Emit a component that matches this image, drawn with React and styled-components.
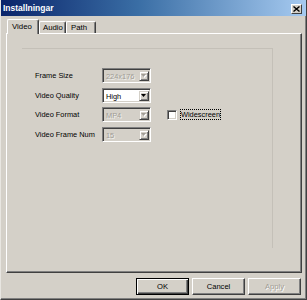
import React from "react";
import styled, { createGlobalStyle, css } from "styled-components";

const GlobalStyle = createGlobalStyle`
  html, body { margin: 0; padding: 0; background: #d4d0c8; }
  body { font-family: "Liberation Sans", Arial, sans-serif; }
  * { box-sizing: border-box; }
`;

const Window = styled.div`
  width: 307px;
  height: 300px;
  background: #d4d0c8;
  display: flex;
  flex-direction: column;
  border-left: 1px solid #e8e6e1;
  border-right: 1px solid #404040;
  border-bottom: 1px solid #404040;
  box-shadow: inset -1px -1px 0 #808080;
  overflow: hidden;
`;

const TitleBar = styled.div`
  height: 16px;
  flex: none;
  display: flex;
  align-items: center;
  justify-content: space-between;
  padding: 0 4px 0 2px;
  background: linear-gradient(90deg, #0a246a 0%, #3a6ea5 45%, #a6caf0 100%);
`;

const Title = styled.span`
  color: #fff;
  font-weight: bold;
  font-size: 8.5px;
  line-height: 16px;
`;

const CloseButton = styled.div`
  width: 11px;
  height: 10px;
  margin-top: 1px;
  background: #d4d0c8;
  border-top: 1px solid #fff;
  border-left: 1px solid #fff;
  border-right: 1px solid #404040;
  border-bottom: 1px solid #404040;
  display: flex;
  align-items: center;
  justify-content: center;
`;

const Body = styled.div`
  flex: 1;
  display: flex;
  flex-direction: column;
  padding: 3px 4px 0 5px;
`;

const TabRow = styled.div`
  display: flex;
  align-items: flex-end;
  padding-left: 1px;
  height: 14px;
  position: relative;
  z-index: 1;
`;

const Tab = styled.div`
  width: ${(p) => p.$w}px;
  height: ${(p) => (p.$active ? 15 : 12)}px;
  margin-bottom: ${(p) => (p.$active ? -1 : 0)}px;
  background: #d4d0c8;
  border-top: 1px solid #fff;
  border-left: 1px solid #fff;
  border-right: 1px solid #404040;
  box-shadow: inset -1px 0 0 #808080;
  border-radius: 2px 2px 0 0;
  font-size: 7.8px;
  color: #000;
  padding-left: ${(p) => p.$pl}px;
  display: flex;
  align-items: center;
  ${(p) => p.$active && css`padding-bottom: 1px;`}
`;

const Panel = styled.div`
  height: 240px;
  flex: none;
  border-top: 1px solid #fff;
  border-left: 1px solid #fff;
  border-right: 1px solid #404040;
  border-bottom: 1px solid #404040;
  box-shadow: inset -1px -1px 0 #808080;
  padding: 14px 0 0 15px;
`;

const GroupBox = styled.div`
  width: 251px;
  height: 200px;
  border-top: 1px solid #c4c0b8;
  border-right: 1px solid #c4c0b8;
  padding: 19px 0 0 13px;
`;

const FormGrid = styled.div`
  display: grid;
  grid-template-columns: 67px 49px auto;
  grid-auto-rows: 15px;
  row-gap: 4.67px;
  align-items: center;
`;

const Label = styled.span`
  font-size: 7.4px;
  color: #000;
  white-space: nowrap;
`;

const Combo = styled.div`
  width: 49px;
  height: 15px;
  display: flex;
  align-items: stretch;
  border-top: 1px solid #808080;
  border-left: 1px solid #808080;
  border-right: 1px solid #fff;
  border-bottom: 1px solid #fff;
  box-shadow: inset 1px 1px 0 #404040, inset -1px -1px 0 #d4d0c8;
  padding: 2px 1px 1px 2px;
  background: ${(p) => (p.$disabled ? "#d4d0c8" : "#fff")};
`;

const ComboText = styled.span`
  flex: 1;
  font-size: 7.4px;
  line-height: 11px;
  padding-left: 1px;
  color: ${(p) => (p.$disabled ? "#a09c95" : "#000")};
  ${(p) => p.$disabled && css`text-shadow: 1px 1px 0 #f2f1ee;`}
`;

const ComboButton = styled.div`
  width: 10px;
  flex: none;
  background: #d4d0c8;
  border-top: 1px solid #d4d0c8;
  border-left: 1px solid #d4d0c8;
  border-right: 1px solid #404040;
  border-bottom: 1px solid #404040;
  box-shadow: inset 1px 1px 0 #fff, inset -1px -1px 0 #808080;
  display: flex;
  align-items: center;
  justify-content: center;
`;

const CheckCell = styled.div`
  display: flex;
  align-items: center;
  margin-left: 16px;
`;

const CheckBox = styled.div`
  width: 10px;
  height: 10px;
  background: #fff;
  border-top: 1px solid #808080;
  border-left: 1px solid #808080;
  border-right: 1px solid #fff;
  border-bottom: 1px solid #fff;
  box-shadow: inset 1px 1px 0 #404040, inset -1px -1px 0 #d4d0c8;
`;

const CheckLabel = styled.span`
  margin-left: 3px;
  font-size: 7.4px;
  color: #000;
  padding: 1px 1px;
  outline: 1px dotted #000;
  outline-offset: -1px;
  line-height: 9px;
`;

const ButtonRow = styled.div`
  display: flex;
  justify-content: flex-end;
  gap: 3px;
  margin-top: 5px;
  padding-right: 1px;
`;

const Button = styled.div`
  width: 53px;
  height: 17px;
  display: flex;
  align-items: center;
  justify-content: center;
  font-size: 7.6px;
  background: #d4d0c8;
  color: ${(p) => (p.$disabled ? "#a09c95" : "#000")};
  ${(p) => p.$disabled && css`text-shadow: 1px 1px 0 #fff;`}
  border-top: 1px solid #fff;
  border-left: 1px solid #fff;
  border-right: 1px solid #404040;
  border-bottom: 1px solid #404040;
  box-shadow: inset -1px -1px 0 #808080;
  ${(p) =>
    p.$default &&
    css`
      border: 1px solid #000;
      box-shadow: inset 1px 1px 0 #fff, inset -1px -1px 0 #404040, inset -2px -2px 0 #808080;
    `}
`;

const Arrow = ({ disabled }) => (
  <svg width="6" height="4" viewBox="0 0 6 4">
    {disabled && <path d="M1 1h5l-2.5 3z" fill="#fff" />}
    <path d="M0 0h5l-2.5 3z" fill={disabled ? "#a09c95" : "#000"} />
  </svg>
);

const ComboBox = ({ value, disabled }) => (
  <Combo $disabled={disabled}>
    <ComboText $disabled={disabled}>{value}</ComboText>
    <ComboButton>
      <Arrow disabled={disabled} />
    </ComboButton>
  </Combo>
);

export default function App() {
  return (
    <>
      <GlobalStyle />
      <Window>
        <TitleBar>
          <Title>Installningar</Title>
          <CloseButton>
            <svg width="7" height="6" viewBox="0 0 7 6">
              <path d="M0.5 0.5l6 5M6.5 0.5l-6 5" stroke="#000" strokeWidth="1.4" />
            </svg>
          </CloseButton>
        </TitleBar>
        <Body>
          <TabRow>
            <Tab $active $w={32} $pl={4}>Video</Tab>
            <Tab $w={27} $pl={3}>Audio</Tab>
            <Tab $w={30} $pl={4}>Path</Tab>
          </TabRow>
          <Panel>
            <GroupBox>
              <FormGrid>
                <Label>Frame Size</Label>
                <ComboBox value="224x176" disabled />
                <span />
                <Label>Video Quality</Label>
                <ComboBox value="High" />
                <span />
                <Label>Video Format</Label>
                <ComboBox value="MP4" disabled />
                <CheckCell>
                  <CheckBox />
                  <CheckLabel>Widescreen</CheckLabel>
                </CheckCell>
                <Label>Video Frame Num</Label>
                <ComboBox value="15" disabled />
                <span />
              </FormGrid>
            </GroupBox>
          </Panel>
          <ButtonRow>
            <Button $default>OK</Button>
            <Button>Cancel</Button>
            <Button $disabled>Apply</Button>
          </ButtonRow>
        </Body>
      </Window>
    </>
  );
}
